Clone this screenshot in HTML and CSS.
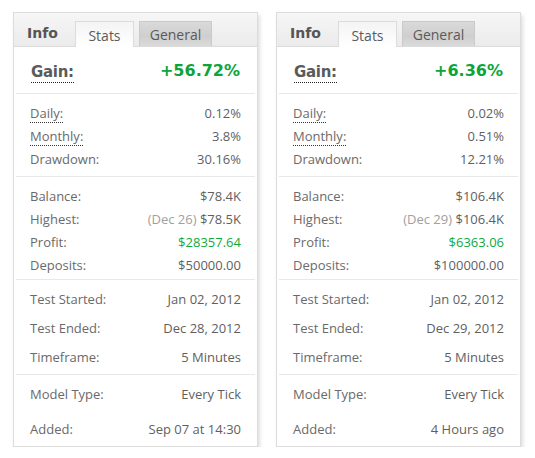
FILE: index.html
```html
<!DOCTYPE html>
<html>
<head>
<meta charset="utf-8">
<link rel="stylesheet" href="styles.css">
</head>
<body>
<div class="panels">
  <div class="panel">
    <div class="tabs">
      <span class="tab-title">Info</span>
      <span class="tab active">Stats</span>
      <span class="tab general">General</span>
    </div>
    <div class="gain-row">
      <span class="gain-lbl">Gain:</span>
      <span class="gain-val">+56.72%</span>
    </div>
    <div class="group g1">
      <div class="row"><span class="lbl dotted">Daily:</span><span class="val">0.12%</span></div>
      <div class="row"><span class="lbl dotted">Monthly:</span><span class="val">3.8%</span></div>
      <div class="row"><span class="lbl">Drawdown:</span><span class="val">30.16%</span></div>
    </div>
    <div class="group g2">
      <div class="row"><span class="lbl">Balance:</span><span class="val">$78.4K</span></div>
      <div class="row"><span class="lbl">Highest:</span><span class="val"><span class="muted">(Dec 26)</span> $78.5K</span></div>
      <div class="row"><span class="lbl">Profit:</span><span class="val green">$28357.64</span></div>
      <div class="row"><span class="lbl">Deposits:</span><span class="val">$50000.00</span></div>
    </div>
    <div class="group g3">
      <div class="row"><span class="lbl">Test Started:</span><span class="val">Jan 02, 2012</span></div>
      <div class="row"><span class="lbl">Test Ended:</span><span class="val">Dec 28, 2012</span></div>
      <div class="row"><span class="lbl">Timeframe:</span><span class="val">5 Minutes</span></div>
    </div>
    <div class="group g4">
      <div class="row"><span class="lbl">Model Type:</span><span class="val">Every Tick</span></div>
      <div class="row"><span class="lbl">Added:</span><span class="val">Sep 07 at 14:30</span></div>
    </div>
  </div>

  <div class="panel">
    <div class="tabs">
      <span class="tab-title">Info</span>
      <span class="tab active">Stats</span>
      <span class="tab general">General</span>
    </div>
    <div class="gain-row">
      <span class="gain-lbl">Gain:</span>
      <span class="gain-val">+6.36%</span>
    </div>
    <div class="group g1">
      <div class="row"><span class="lbl dotted">Daily:</span><span class="val">0.02%</span></div>
      <div class="row"><span class="lbl dotted">Monthly:</span><span class="val">0.51%</span></div>
      <div class="row"><span class="lbl">Drawdown:</span><span class="val">12.21%</span></div>
    </div>
    <div class="group g2">
      <div class="row"><span class="lbl">Balance:</span><span class="val">$106.4K</span></div>
      <div class="row"><span class="lbl">Highest:</span><span class="val"><span class="muted">(Dec 29)</span> $106.4K</span></div>
      <div class="row"><span class="lbl">Profit:</span><span class="val green">$6363.06</span></div>
      <div class="row"><span class="lbl">Deposits:</span><span class="val">$100000.00</span></div>
    </div>
    <div class="group g3">
      <div class="row"><span class="lbl">Test Started:</span><span class="val">Jan 02, 2012</span></div>
      <div class="row"><span class="lbl">Test Ended:</span><span class="val">Dec 29, 2012</span></div>
      <div class="row"><span class="lbl">Timeframe:</span><span class="val">5 Minutes</span></div>
    </div>
    <div class="group g4">
      <div class="row"><span class="lbl">Model Type:</span><span class="val">Every Tick</span></div>
      <div class="row"><span class="lbl">Added:</span><span class="val">4 Hours ago</span></div>
    </div>
  </div>
</div>
</body>
</html>
```

FILE: styles.css
```css
html, body {
  margin: 0;
  padding: 0;
  background: #ffffff;
}
body {
  padding: 12px 0 0 13px;
  font-family: "Open Sans", "Noto Sans", sans-serif;
  font-size: 13px;
  color: #5f5f5f;
}
.panels {
  display: flex;
  gap: 18px;
  align-items: flex-start;
}
.panel {
  width: 243px;
  border: 1px solid #dcdcdc;
  background: #fff;
  box-shadow: 2px 3px 4px rgba(0, 0, 0, 0.13);
}
.tabs {
  height: 33px;
  display: flex;
  align-items: flex-end;
  background: linear-gradient(#f6f6f6, #ebebeb);
  border-bottom: 1px solid #dcdcdc;
  padding-left: 13px;
}
.tab-title {
  font-family: "DejaVu Sans", Verdana, sans-serif;
  font-weight: bold;
  font-size: 14px;
  color: #555;
  align-self: center;
  width: 48px;
  margin-top: 6px;
}
.tab {
  height: 25px;
  box-sizing: border-box;
  border: 1px solid #d6d6d6;
  border-bottom: none;
  display: flex;
  align-items: center;
  justify-content: center;
  font-size: 14px;
  color: #5a5a5a;
  margin-bottom: -1px;
}
.tab.active {
  width: 59px;
  height: 26px;
  background: linear-gradient(#f4f4f4, #ffffff);
  border-color: #dcdcdc;
  padding-top: 1px;
}
.tab.general {
  width: 73px;
  margin-left: 5px;
  margin-bottom: 0;
  background: linear-gradient(#d9d9d9, #cfcfcf 60%, #dadada);
  border-color: #cacaca;
  padding-top: 1px;
}
.gain-row {
  height: 47px;
  display: flex;
  justify-content: space-between;
  align-items: center;
  padding: 0 15px;
  margin: 0 2px;
  border-bottom: 1px solid #e8e8e8;
  box-sizing: border-box;
}
.gain-lbl {
  font-family: "DejaVu Sans", Verdana, sans-serif;
  font-weight: bold;
  font-size: 15px;
  letter-spacing: -0.3px;
  color: #5a5a5a;
  border-bottom: 1px dotted #222;
  line-height: 19px;
  margin-top: 6px;
}
.gain-val {
  font-family: "DejaVu Sans", Verdana, sans-serif;
  font-weight: bold;
  font-size: 16px;
  color: #0ca43b;
  margin-top: 1px;
}
.group {
  margin: 0 2px;
  padding: 0 14px;
  border-bottom: 1px solid #e8e8e8;
}
.group.g4 {
  border-bottom: none;
}
.row {
  display: flex;
  justify-content: space-between;
  align-items: flex-start;
  line-height: 17px;
  box-sizing: border-box;
  padding-top: 4px;
}
.g1 { padding-top: 7px; padding-bottom: 6px; }
.g1 .row, .g2 .row { height: 23px; }
.g2 { padding-top: 7px; padding-bottom: 3px; }
.g3 { padding-top: 4px; padding-bottom: 3px; }
.g3 .row { height: 29px; padding-top: 7px; }
.g4 { padding-top: 1px; padding-bottom: 0; }
.g4 .row { height: 35px; padding-top: 10px; }
.lbl {
  color: #6a6a6a;
}
.lbl.dotted {
  border-bottom: 1px dotted #333;
}
.val {
  color: #5f5f5f;
}
.muted {
  color: #a0a0a0;
}
.green {
  color: #0faa3c;
}
```
